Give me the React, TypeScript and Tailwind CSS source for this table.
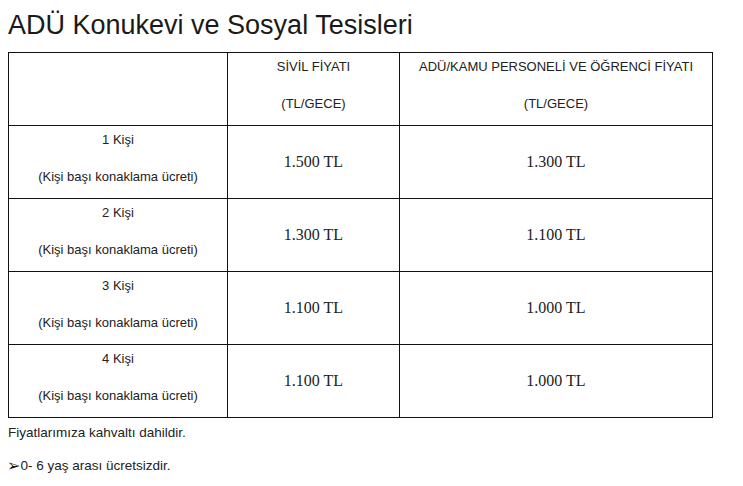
const rows = [
  { label: "1 Kişi", sivil: "1.500 TL", personel: "1.300 TL" },
  { label: "2 Kişi", sivil: "1.300 TL", personel: "1.100 TL" },
  { label: "3 Kişi", sivil: "1.100 TL", personel: "1.000 TL" },
  { label: "4 Kişi", sivil: "1.100 TL", personel: "1.000 TL" },
];

function TwoLines({ top, bottom }: { top: string; bottom: string }) {
  return (
    <div className="flex flex-col items-center pt-[6px] gap-[22px] leading-[15px] text-[13px] text-[#222]">
      <span>{top}</span>
      <span>{bottom}</span>
    </div>
  );
}

export default function App() {
  return (
    <div className="w-[743px] h-[486px] bg-white px-[8px] font-['Liberation_Sans',Arial,sans-serif] text-[#111]">
      <h1 className="pt-[9px] text-[27px] leading-[32px] text-[#1a1a1a]">ADÜ Konukevi ve Sosyal Tesisleri</h1>
      <table className="mt-[11px] border-collapse w-[704px] table-fixed">
        <colgroup>
          <col className="w-[219px]" />
          <col className="w-[172px]" />
          <col className="w-[313px]" />
        </colgroup>
        <tbody>
          <tr className="h-[73px]">
            <td className="border border-[#111] p-0"></td>
            <td className="border border-[#111] p-0 align-top">
              <TwoLines top="SİVİL FİYATI" bottom="(TL/GECE)" />
            </td>
            <td className="border border-[#111] p-0 align-top">
              <TwoLines top="ADÜ/KAMU PERSONELİ VE ÖĞRENCİ FİYATI" bottom="(TL/GECE)" />
            </td>
          </tr>
          {rows.map((r) => (
            <tr key={r.label} className="h-[73px]">
              <td className="border border-[#111] p-0 align-top">
                <TwoLines top={r.label} bottom="(Kişi başı konaklama ücreti)" />
              </td>
              <td className="border border-[#111] p-0 text-center align-middle font-['Liberation_Serif','Times_New_Roman',serif] text-[16px] text-[#222]">
                {r.sivil}
              </td>
              <td className="border border-[#111] p-0 text-center align-middle font-['Liberation_Serif','Times_New_Roman',serif] text-[16px] text-[#222]">
                {r.personel}
              </td>
            </tr>
          ))}
        </tbody>
      </table>
      <p className="mt-[7px] text-[13.5px] leading-[15px] text-[#222]">Fiyatlarımıza kahvaltı dahildir.</p>
      <p className="mt-[18px] -ml-[1px] flex items-center text-[13.5px] leading-[16px] text-[#222]">
        <span className="font-['DejaVu_Sans',sans-serif] text-[16px] leading-[16px] text-[#111]">➢</span>
        <span>0- 6 yaş arası ücretsizdir.</span>
      </p>
    </div>
  );
}
